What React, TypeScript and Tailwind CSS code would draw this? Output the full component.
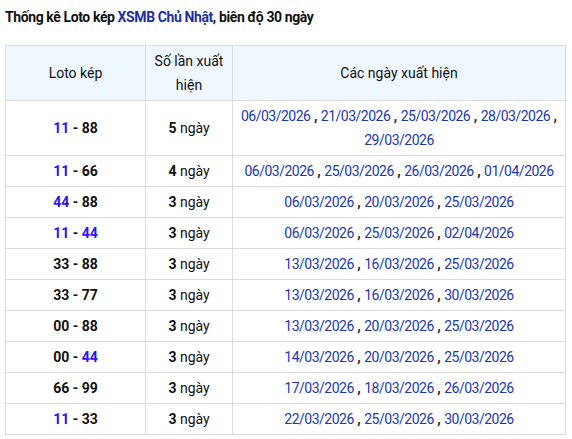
const rows: { a: string; b: string; aBlue: boolean; bBlue: boolean; n: number; dates: string[] }[] = [
  { a: "11", b: "88", aBlue: true, bBlue: false, n: 5, dates: ["06/03/2026", "21/03/2026", "25/03/2026", "28/03/2026", "29/03/2026"] },
  { a: "11", b: "66", aBlue: true, bBlue: false, n: 4, dates: ["06/03/2026", "25/03/2026", "26/03/2026", "01/04/2026"] },
  { a: "44", b: "88", aBlue: true, bBlue: false, n: 3, dates: ["06/03/2026", "20/03/2026", "25/03/2026"] },
  { a: "11", b: "44", aBlue: true, bBlue: true, n: 3, dates: ["06/03/2026", "25/03/2026", "02/04/2026"] },
  { a: "33", b: "88", aBlue: false, bBlue: false, n: 3, dates: ["13/03/2026", "16/03/2026", "25/03/2026"] },
  { a: "33", b: "77", aBlue: false, bBlue: false, n: 3, dates: ["13/03/2026", "16/03/2026", "30/03/2026"] },
  { a: "00", b: "88", aBlue: false, bBlue: false, n: 3, dates: ["13/03/2026", "20/03/2026", "25/03/2026"] },
  { a: "00", b: "44", aBlue: false, bBlue: true, n: 3, dates: ["14/03/2026", "20/03/2026", "25/03/2026"] },
  { a: "66", b: "99", aBlue: false, bBlue: false, n: 3, dates: ["17/03/2026", "18/03/2026", "26/03/2026"] },
  { a: "11", b: "33", aBlue: true, bBlue: false, n: 3, dates: ["22/03/2026", "25/03/2026", "30/03/2026"] },
];

export default function App() {
  return (
    <div className="bg-white px-[5px] pt-[5px] text-[14px] text-[#111]" style={{ fontFamily: "Roboto, 'Liberation Sans', sans-serif" }}>
      <h2 className="font-bold leading-[24px] mb-[16px] tracking-[-0.4px]">
        Thống kê Loto kép <span className="text-[#1c2fa0]">XSMB Chủ Nhật</span>, biên độ 30 ngày
      </h2>
      <table className="border-collapse table-fixed w-[561px] text-center leading-[24px]">
        <colgroup>
          <col className="w-[140px]" />
          <col className="w-[87px]" />
          <col />
        </colgroup>
        <thead>
          <tr className="bg-[#eff7ff]">
            <th className="border border-[#dddddd] font-normal py-[3px] px-1">Loto kép</th>
            <th className="border border-[#dddddd] font-normal py-[3px] px-1">Số lần xuất hiện</th>
            <th className="border border-[#dddddd] font-normal py-[3px] px-1">Các ngày xuất hiện</th>
          </tr>
        </thead>
        <tbody>
          {rows.map((r, i) => (
            <tr key={i}>
              <td className="border border-[#dddddd] py-[3px] font-bold">
                <span className={r.aBlue ? "text-[#2a14f0]" : ""}>{r.a}</span>
                {" - "}
                <span className={r.bBlue ? "text-[#2a14f0]" : ""}>{r.b}</span>
              </td>
              <td className="border border-[#dddddd] py-[3px]">
                <b>{r.n}</b> ngày
              </td>
              <td className="border border-[#dddddd] py-[3px] px-[4px]">
                {r.dates.map((d, j) => (
                  <span key={j}>
                    <span className="text-[#1b38ad] tracking-[-0.5px]">{d}</span>
                    {j < r.dates.length - 1 && <span className="text-[#222] font-bold"> , </span>}
                  </span>
                ))}
              </td>
            </tr>
          ))}
        </tbody>
      </table>
    </div>
  );
}
